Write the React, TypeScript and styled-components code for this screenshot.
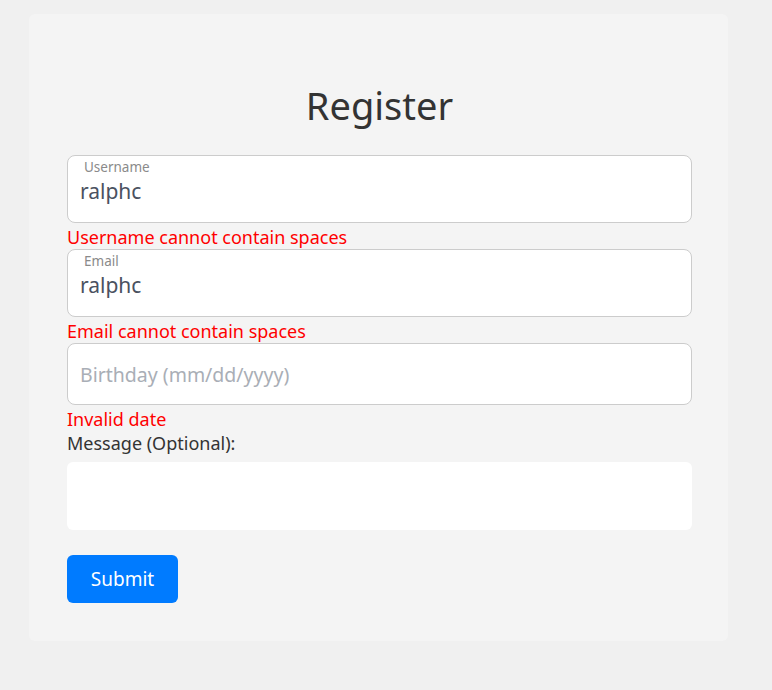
import React, { useState } from 'react';
import styled, { createGlobalStyle } from 'styled-components';

const GlobalStyle = createGlobalStyle`
  html, body {
    margin: 0;
    padding: 0;
    background: #f0f0f0;
    font-family: "Noto Sans", "Open Sans", sans-serif;
  }
  * {
    box-sizing: border-box;
  }
`;

const Page = styled.div`
  min-height: 690px;
  padding: 14px 44px 49px 29px;
`;

const Card = styled.div`
  width: 699px;
  background: #f4f4f4;
  border-radius: 6px;
  padding: 68px 36px 38px 38px;
`;

const Title = styled.h2`
  margin: 0 0 27px;
  font-size: 38px;
  line-height: 46px;
  font-weight: 400;
  color: #333;
  text-align: center;
`;

const Field = styled.div`
  position: relative;
`;

const FloatLabel = styled.span`
  position: absolute;
  top: 3px;
  left: 17px;
  font-size: 13.5px;
  color: #8a8a8a;
  pointer-events: none;
`;

const Input = styled.input<{ $labelled?: boolean }>`
  display: block;
  width: 100%;
  font-family: inherit;
  font-size: 21px;
  line-height: 26px;
  color: #4a5160;
  background: #fff;
  border: 1px solid #ccc;
  border-radius: 8px;
  padding: ${p => (p.$labelled ? '22px 12px 18px' : '17px 12px 17px')};
  outline: none;

  &::placeholder {
    color: #a9aeb6;
    font-size: 19.5px;
  }
`;

const ErrorMsg = styled.div`
  margin-top: 2px;
  font-size: 18px;
  line-height: 24px;
  color: #ff0000;
`;

const Label = styled.label`
  display: block;
  margin-bottom: 7px;
  font-size: 18px;
  line-height: 24px;
  color: #333;
`;

const TextArea = styled.textarea`
  display: block;
  width: 100%;
  height: 68px;
  border: none;
  border-radius: 6px;
  background: #fff;
  font-family: inherit;
  font-size: 18px;
  padding: 10px 12px;
  resize: none;
  outline: none;
`;

const Button = styled.button`
  display: block;
  margin-top: 25px;
  width: 111px;
  height: 48px;
  border: none;
  border-radius: 6px;
  background: #007bff;
  color: #fff;
  font-family: inherit;
  font-size: 19px;
  cursor: pointer;
`;

const App: React.FC = () => {
  const [username, setUsername] = useState('ralphc');
  const [email, setEmail] = useState('ralphc');
  const [birthday, setBirthday] = useState('');
  const [message, setMessage] = useState('');

  return (
    <>
      <GlobalStyle />
      <Page>
        <Card>
          <Title>Register</Title>
          <form onSubmit={e => e.preventDefault()}>
            <Field>
              <FloatLabel>Username</FloatLabel>
              <Input $labelled value={username} onChange={e => setUsername(e.target.value)} />
            </Field>
            <ErrorMsg>Username cannot contain spaces</ErrorMsg>
            <Field>
              <FloatLabel>Email</FloatLabel>
              <Input $labelled value={email} onChange={e => setEmail(e.target.value)} />
            </Field>
            <ErrorMsg>Email cannot contain spaces</ErrorMsg>
            <Input
              placeholder="Birthday (mm/dd/yyyy)"
              value={birthday}
              onChange={e => setBirthday(e.target.value)}
            />
            <ErrorMsg>Invalid date</ErrorMsg>
            <Label htmlFor="message">Message (Optional):</Label>
            <TextArea id="message" value={message} onChange={e => setMessage(e.target.value)} />
            <Button type="submit">Submit</Button>
          </form>
        </Card>
      </Page>
    </>
  );
};

export default App;
